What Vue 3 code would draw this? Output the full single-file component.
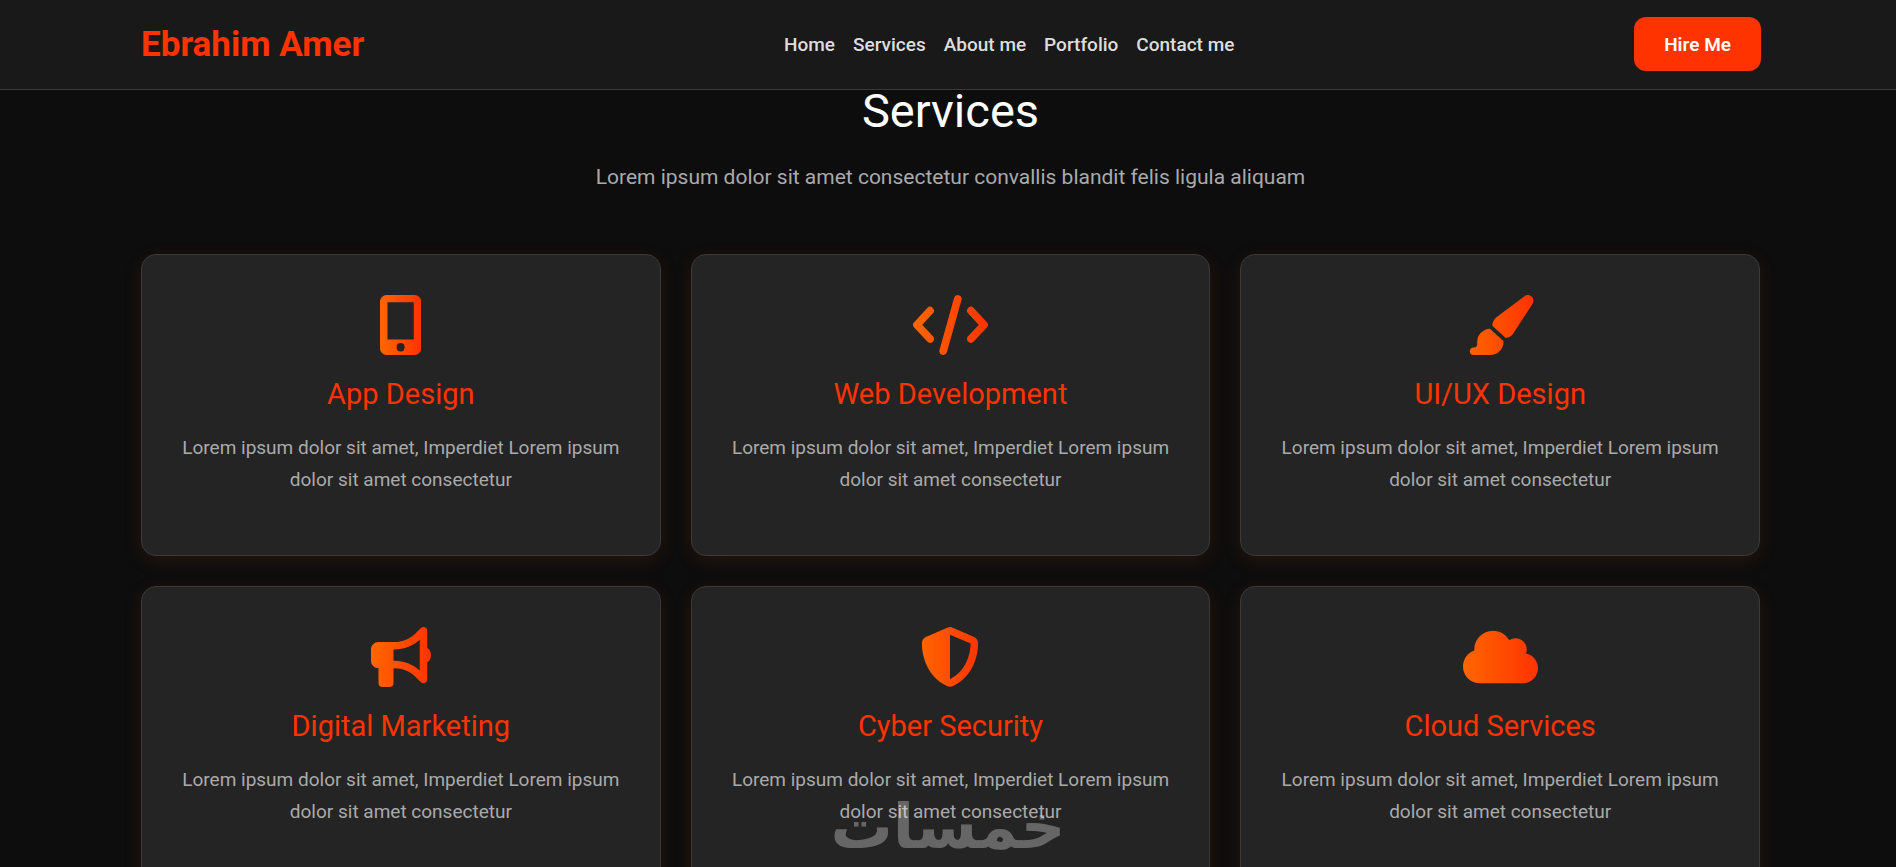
<script setup>
const links = ['Home', 'Services', 'About me', 'Portfolio', 'Contact me']
const blurb = 'Lorem ipsum dolor sit amet, Imperdiet Lorem ipsum dolor sit amet consectetur'

const services = [
  {
    id: 'app',
    title: 'App Design',
    width: 352,
    path: 'M56 0H296A56 56 0 0 1 352 56V456A56 56 0 0 1 296 512H56A56 56 0 0 1 0 456V56A56 56 0 0 1 56 0ZM64 62V380H288V62ZM176 410A34 36 0 1 0 176 482A34 36 0 1 0 176 410Z'
  },
  {
    id: 'code',
    title: 'Web Development',
    width: 640,
    stroke: 'M146 134L34 254L146 374M382 34L258 478M494 134L606 254L494 374'
  },
  {
    id: 'brush',
    title: 'UI/UX Design',
    width: 576,
    path: 'M339.3 367.1c27.3-3.9 51.9-19.4 67.2-42.9L568.2 74.1c12.6-19.5 9.4-45.3-7.6-61.2S517.7-4.4 499.1 9.6L262.4 187.2c-24 18-38.2 46.1-38.4 76.1L339.3 367.1zm-19.6 25.4l-116-104.4C143.9 290.3 96 339.6 96 400c0 3.9 .2 7.8 .6 11.6C98.4 429.1 86.4 448 68.8 448H64c-17.7 0-32 14.3-32 32s14.3 32 32 32H208c61.9 0 112-50.1 112-112c0-2.5-.1-5-.2-7.5z'
  },
  {
    id: 'horn',
    title: 'Digital Marketing',
    width: 512,
    path: 'M480 32c0-12.9-7.8-24.6-19.8-29.6s-25.7-2.2-34.9 6.9L381.7 53c-48 48-113.1 75-181 75H192 160 64c-35.3 0-64 28.7-64 64v96c0 35.3 28.7 64 64 64l0 128c0 17.7 14.3 32 32 32h64c17.7 0 32-14.3 32-32V352l8.7 0c67.9 0 133 27 181 75l43.6 43.6c9.2 9.2 22.9 11.9 34.9 6.9s19.8-16.6 19.8-29.6V300.4c18.6-8.8 32-32.5 32-60.4s-13.4-51.6-32-60.4V32zm-64 76.7V240 371.3C357.2 317.8 280.5 288 200.7 288H192V192h8.7c79.8 0 156.5-29.8 215.3-83.3z'
  },
  {
    id: 'shield',
    title: 'Cyber Security',
    width: 512,
    path: 'M256 0c4.6 0 9.2 1 13.4 2.9L457.7 82.8c22 9.3 38.4 31 38.3 57.2c-.5 99.2-41.3 280.7-213.6 363.2c-16.7 8-36.1 8-52.8 0C57.3 420.7 16.5 239.2 16 140c-.1-26.2 16.3-47.9 38.3-57.2L242.7 2.9C246.8 1 251.4 0 256 0zm0 66.8V444.8C394 378 431.1 230.1 432 141.4L256 66.8z'
  },
  {
    id: 'cloud',
    title: 'Cloud Services',
    width: 640,
    path: 'M0 336c0 79.5 64.5 144 144 144H512c70.7 0 128-57.3 128-128c0-61.9-44-113.6-102.4-125.4c4.1-10.7 6.4-22.4 6.4-34.6c0-53-43-96-96-96c-19.7 0-38.1 6-53.3 16.2C367 64.2 315.3 32 256 32C167.6 32 96 103.6 96 192c0 2.7 .1 5.4 .2 8.1C40.2 219.8 0 273.2 0 336z'
  }
]
</script>

<template>
  <div class="page">
    <header class="bar">
      <a class="brand" href="#">Ebrahim Amer</a>
      <nav class="nav">
        <a v-for="link in links" :key="link" href="#">{{ link }}</a>
      </nav>
      <button class="hire" type="button">Hire Me</button>
    </header>

    <main class="services">
      <h2 class="title">Services</h2>
      <p class="tagline">Lorem ipsum dolor sit amet consectetur convallis blandit felis ligula aliquam</p>
      <div class="grid">
        <article v-for="s in services" :key="s.id" class="card">
          <svg class="icon" :viewBox="`0 0 ${s.width} 512`" aria-hidden="true">
            <defs>
              <linearGradient :id="`fill-${s.id}`" gradientUnits="userSpaceOnUse" x1="0" y1="0" :x2="s.width" y2="0">
                <stop offset="0" stop-color="#ff6600" />
                <stop offset="1" stop-color="#ff3300" />
              </linearGradient>
            </defs>
            <path v-if="s.path" :d="s.path" :fill="`url(#fill-${s.id})`" fill-rule="evenodd" />
            <path
              v-else
              :d="s.stroke"
              :stroke="`url(#fill-${s.id})`"
              fill="none"
              stroke-width="66"
              stroke-linecap="round"
              stroke-linejoin="round"
            />
          </svg>
          <h3>{{ s.title }}</h3>
          <p>{{ blurb }}</p>
        </article>
      </div>
    </main>

    <div class="watermark" lang="ar" dir="rtl">خمسات</div>
  </div>
</template>

<style>
body {
  background: #0d0d0d;
}
</style>

<style scoped>
.page {
  position: relative;
  height: 100vh;
  overflow: hidden;
  background: #0d0d0d;
  font-family: Roboto, "Liberation Sans", sans-serif;
}
.bar {
  display: flex;
  align-items: center;
  justify-content: space-between;
  padding: 17px 135px 18px 141px;
  background: #191919;
  border-bottom: 1px solid #3a3a3a;
}
a {
  color: inherit;
  text-decoration: none;
}
.brand {
  color: #ff3300;
  font-size: 35px;
  font-weight: 700;
}
.nav {
  display: flex;
  gap: 18px;
  padding-left: 20px;
  color: #dddddd;
  font-size: 19px;
  font-weight: 500;
}
.hire {
  height: 54px;
  padding: 0 30px;
  border: 0;
  border-radius: 12px;
  background: #ff3300;
  color: #ffffff;
  font: inherit;
  font-size: 19px;
  font-weight: 600;
}
.services {
  padding: 0 136px 0 141px;
  text-align: center;
}
.title {
  margin: 0;
  color: #ffffff;
  font-size: 47px;
  font-weight: 400;
  line-height: 42px;
}
.tagline {
  margin: 29px 0 61px;
  color: #aaaaaa;
  font-size: 21px;
  line-height: 32px;
}
.grid {
  display: grid;
  grid-template-columns: repeat(3, 1fr);
  gap: 30px;
}
.card {
  padding: 40px;
  border: 1px solid #3a3a3a;
  border-radius: 15px;
  background: #242424;
  box-shadow: 0 5px 20px rgba(255, 102, 0, 0.1);
}
.icon {
  display: block;
  height: 60px;
  margin: 0 auto;
}
.card h3 {
  margin: 19px 0 18px;
  color: #ff3300;
  font-size: 29px;
  font-weight: 400;
  line-height: 40px;
}
.card p {
  margin: 0 0 19px;
  color: #aaaaaa;
  font-size: 19px;
  line-height: 32px;
}
.watermark {
  position: absolute;
  bottom: 4px;
  left: 50%;
  transform: translateX(-50%);
  color: #ffffff;
  opacity: 0.3;
  font-family: "DejaVu Sans", sans-serif;
  font-size: 62px;
  font-weight: 700;
  line-height: 72px;
  pointer-events: none;
}
</style>
